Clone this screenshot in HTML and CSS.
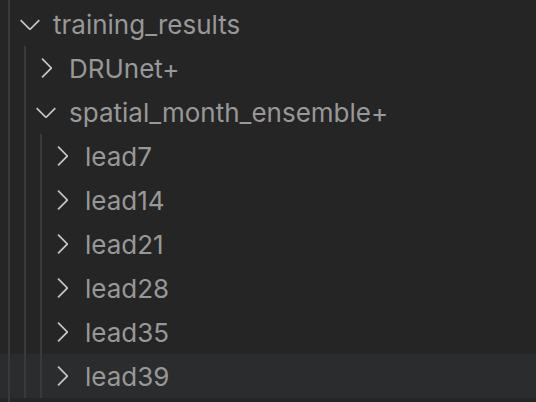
FILE: index.html
```html
<!DOCTYPE html>
<html>
<head>
<meta charset="utf-8">
<link rel="stylesheet" href="styles.css">
</head>
<body>
<div class="tree">
  <div class="row lvl0">
    <svg class="twistie" viewBox="0 0 16 16"><path d="M7.976 10.072l4.357-4.357.62.618L8.284 11h-.618L3 6.333l.619-.618 4.357 4.357z"/></svg>
    <span class="label">training_results</span>
  </div>
  <div class="row lvl1">
    <svg class="twistie" viewBox="0 0 16 16"><path d="M10.072 8.024L5.715 3.667l.618-.62L11 7.716v.618L6.333 13l-.618-.619 4.357-4.357z"/></svg>
    <span class="label">DRUnet+</span>
  </div>
  <div class="row lvl1">
    <svg class="twistie" viewBox="0 0 16 16"><path d="M7.976 10.072l4.357-4.357.62.618L8.284 11h-.618L3 6.333l.619-.618 4.357 4.357z"/></svg>
    <span class="label">spatial_month_ensemble+</span>
  </div>
  <div class="row lvl2">
    <svg class="twistie" viewBox="0 0 16 16"><path d="M10.072 8.024L5.715 3.667l.618-.62L11 7.716v.618L6.333 13l-.618-.619 4.357-4.357z"/></svg>
    <span class="label">lead7</span>
  </div>
  <div class="row lvl2">
    <svg class="twistie" viewBox="0 0 16 16"><path d="M10.072 8.024L5.715 3.667l.618-.62L11 7.716v.618L6.333 13l-.618-.619 4.357-4.357z"/></svg>
    <span class="label">lead14</span>
  </div>
  <div class="row lvl2">
    <svg class="twistie" viewBox="0 0 16 16"><path d="M10.072 8.024L5.715 3.667l.618-.62L11 7.716v.618L6.333 13l-.618-.619 4.357-4.357z"/></svg>
    <span class="label">lead21</span>
  </div>
  <div class="row lvl2">
    <svg class="twistie" viewBox="0 0 16 16"><path d="M10.072 8.024L5.715 3.667l.618-.62L11 7.716v.618L6.333 13l-.618-.619 4.357-4.357z"/></svg>
    <span class="label">lead28</span>
  </div>
  <div class="row lvl2">
    <svg class="twistie" viewBox="0 0 16 16"><path d="M10.072 8.024L5.715 3.667l.618-.62L11 7.716v.618L6.333 13l-.618-.619 4.357-4.357z"/></svg>
    <span class="label">lead35</span>
  </div>
  <div class="row lvl2 hover">
    <svg class="twistie" viewBox="0 0 16 16"><path d="M10.072 8.024L5.715 3.667l.618-.62L11 7.716v.618L6.333 13l-.618-.619 4.357-4.357z"/></svg>
    <span class="label">lead39</span>
  </div>
</div>
</body>
</html>
```

FILE: styles.css
```css
html, body {
  margin: 0;
  padding: 0;
  height: 100%;
}
body {
  background-color: #252525;
  background-image: linear-gradient(#3a3a3a, #3a3a3a);
  background-position: 8px 0;
  background-size: 2px 100%;
  background-repeat: no-repeat;
  font-family: Inter, "Noto Sans", sans-serif;
  overflow: hidden;
}
.tree {
  padding-top: 2px;
  display: flex;
  flex-direction: column;
}
.row {
  height: 44px;
  display: flex;
  align-items: center;
  background-repeat: no-repeat;
}
.lvl0 { padding-left: 14px; }
.lvl1 {
  padding-left: 30px;
  background-image: linear-gradient(#3a3a3a, #3a3a3a);
  background-position: 24px 0;
  background-size: 2px 100%;
}
.lvl2 {
  padding-left: 46px;
  background-image: linear-gradient(#3a3a3a, #3a3a3a), linear-gradient(#3a3a3a, #3a3a3a);
  background-position: 24px 0, 40px 0;
  background-size: 2px 100%, 2px 100%;
}
.row.hover {
  background-color: #2b2c2d;
  background-image: linear-gradient(#3a3a3a, #3a3a3a), linear-gradient(#3a3a3a, #3a3a3a), linear-gradient(#3a3a3a, #3a3a3a);
  background-position: 8px 0, 24px 0, 40px 0;
  background-size: 2px 100%, 2px 100%, 2px 100%;
}
.twistie {
  width: 32px;
  height: 32px;
  flex: none;
  fill: #c5c5c5;
}
.label {
  margin-left: 7px;
  padding-top: 2px;
  font-size: 26px;
  line-height: 32px;
  color: #989898;
  white-space: nowrap;
}
```
